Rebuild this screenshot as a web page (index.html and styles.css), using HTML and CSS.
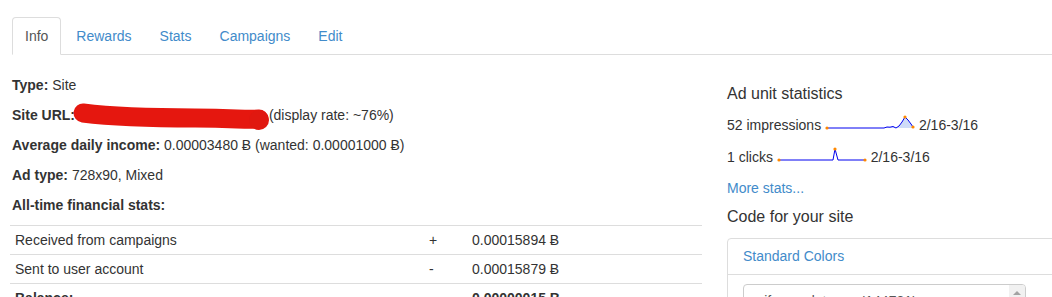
FILE: index.html
```html
<!DOCTYPE html>
<html lang="en">
<head>
    <meta charset="UTF-8">
    <title>Ad unit</title>
    <link rel="stylesheet" href="styles.css">
</head>
<body>
    <ul class="nav-tabs">
        <li class="active"><a href="#">Info</a></li>
        <li><a href="#">Rewards</a></li>
        <li><a href="#">Stats</a></li>
        <li><a href="#">Campaigns</a></li>
        <li><a href="#">Edit</a></li>
    </ul>

    <div class="row">
        <div class="col-main">
            <p><b>Type:</b> Site</p>
            <p><b>Site URL:</b> <svg class="scribble" width="194" height="20" viewBox="0 0 194 20"><path d="M8 8 C 40 12, 80 13, 120 13 S 170 15, 184 14" fill="none" stroke="#e5170f" stroke-width="19" stroke-linecap="round"/><circle cx="184" cy="15" r="10" fill="#e01810"/></svg>(display rate: ~76%)</p>
            <p><b>Average daily income:</b> 0.00003480 Ƀ (wanted: 0.00001000 Ƀ)</p>
            <p><b>Ad type:</b> 728x90, Mixed</p>
            <p><b>All-time financial stats:</b></p>

            <table class="stats-table">
                <tr>
                    <td class="c-label">Received from campaigns</td>
                    <td class="c-sign">+</td>
                    <td>0.00015894 Ƀ</td>
                </tr>
                <tr>
                    <td class="c-label">Sent to user account</td>
                    <td class="c-sign">-</td>
                    <td>0.00015879 Ƀ</td>
                </tr>
                <tr class="total">
                    <td class="c-label">Balance:</td>
                    <td class="c-sign"></td>
                    <td>0.00000015 Ƀ</td>
                </tr>
            </table>
        </div>

        <div class="col-side">
            <h4 class="side-title">Ad unit statistics</h4>
            <p>52 impressions <svg class="spark" width="90" height="16" viewBox="0 0 90 16">
                <polygon points="2,14 59,14 62,13 65,13.2 68,12.5 71,14 74,12 77,8 80,3 83,6 86,10 88,13 88,14" fill="#cfdcf8"/>
                <polyline points="2,14 59,14 62,13 65,13.2 68,12.5 71,14 74,12 77,8 80,3 83,6 86,10 88,13" fill="none" stroke="#0000f0" stroke-width="1"/>
                <circle cx="2" cy="14" r="1.6" fill="#f80"/>
                <circle cx="80" cy="3" r="1.6" fill="#f80"/>
                <circle cx="88" cy="13" r="1.6" fill="#f80"/>
            </svg> 2/16-3/16</p>
            <p>1 clicks <svg class="spark" width="90" height="16" viewBox="0 0 90 16">
                <polyline points="2,14 56,14 58,3 61,14 88,14" fill="none" stroke="#0000f0" stroke-width="1"/>
                <circle cx="2" cy="14" r="1.6" fill="#f80"/>
                <circle cx="58" cy="3" r="1.6" fill="#f80"/>
                <circle cx="88" cy="14" r="1.6" fill="#f80"/>
            </svg> 2/16-3/16</p>
            <p class="more"><a href="#">More stats...</a></p>
            <h4 class="side-title code-title">Code for your site</h4>

            <div class="panel">
                <div class="panel-heading"><a href="#">Standard Colors</a></div>
                <div class="panel-body">
                    <div class="code-wrap">
                        <textarea class="code" rows="4">&lt;iframe data-aa='144781' src='//acceptable.a-ads.com/144781' scrolling='no' style='border:0px; padding:0;overflow:hidden' allowtransparency='true'&gt;&lt;/iframe&gt;</textarea>
                    </div>
                </div>
            </div>
        </div>
    </div>
</body>
</html>
```

FILE: styles.css
```css
html {
    overflow: hidden;
}
body {
    font-family: "Liberation Sans", Arial, sans-serif;
    font-size: 14px;
    line-height: 20px;
    color: #333;
    margin: 0;
    padding: 0 0 0 12px;
    background-color: #fff;
    overflow: hidden;
}
a {
    color: #428bca;
    text-decoration: none;
}
p {
    margin: 0 0 10px;
}

.nav-tabs {
    display: flex;
    list-style: none;
    margin: 17px 0 0;
    padding: 0;
    border-bottom: 1px solid #ddd;
}
.nav-tabs li {
    margin: 0 2px -1px 0;
}
.nav-tabs a {
    display: block;
    padding: 8px 12px;
    border: 1px solid transparent;
    border-radius: 4px 4px 0 0;
}
.nav-tabs .active a {
    color: #555;
    background-color: #fff;
    border-color: #ddd #ddd transparent;
}

.row {
    display: grid;
    grid-template-columns: 690px 360px;
    column-gap: 25px;
    margin-top: 20px;
}

.scribble {
    overflow: visible;
    vertical-align: top;
    margin-left: -4px;
}

.stats-table {
    width: calc(100% + 2px);
    margin-left: -2px;
    border-collapse: collapse;
}
.stats-table td {
    padding: 4px 5px;
    border-top: 1px solid #ddd;
    vertical-align: top;
}
.stats-table .c-label {
    width: 404px;
}
.stats-table .c-sign {
    width: 33px;
}
.stats-table .total td {
    font-weight: bold;
}

.side-title {
    font-size: 16px;
    font-weight: normal;
    line-height: 20px;
    margin: 9px 0 10px;
}
.col-side p {
    margin-bottom: 11px;
}
.col-side .more {
    margin-bottom: 9px;
}
.code-title {
    margin: 0 0 11px;
}
.spark {
    vertical-align: baseline;
}

.panel {
    border: 1px solid #ddd;
    border-radius: 4px;
}
.panel-heading {
    padding: 7px 15px 8px;
    border-bottom: 1px solid #ddd;
}
.panel-body {
    padding: 9px 15px 15px;
}
.code-wrap {
    position: relative;
    width: 283px;
}
/* scrollbar track with the up arrow */
.code-wrap::after {
    content: "";
    position: absolute;
    top: 1px;
    right: 1px;
    bottom: 1px;
    width: 16px;
    background-color: #f1f1f1;
    border-radius: 0 3px 3px 0;
}
.code-wrap::before {
    content: "";
    position: absolute;
    top: 7px;
    right: 5px;
    z-index: 1;
    border-left: 4px solid transparent;
    border-right: 4px solid transparent;
    border-bottom: 4px solid #a3a3a3;
}
.code {
    display: block;
    width: 100%;
    height: 100px;
    box-sizing: border-box;
    padding: 6px 28px 6px 12px;
    border: 1px solid #ccc;
    border-radius: 4px;
    font-family: "Liberation Sans", Arial, sans-serif;
    font-size: 14px;
    line-height: 20px;
    color: #555;
    overflow: hidden;
    resize: none;
}
```
